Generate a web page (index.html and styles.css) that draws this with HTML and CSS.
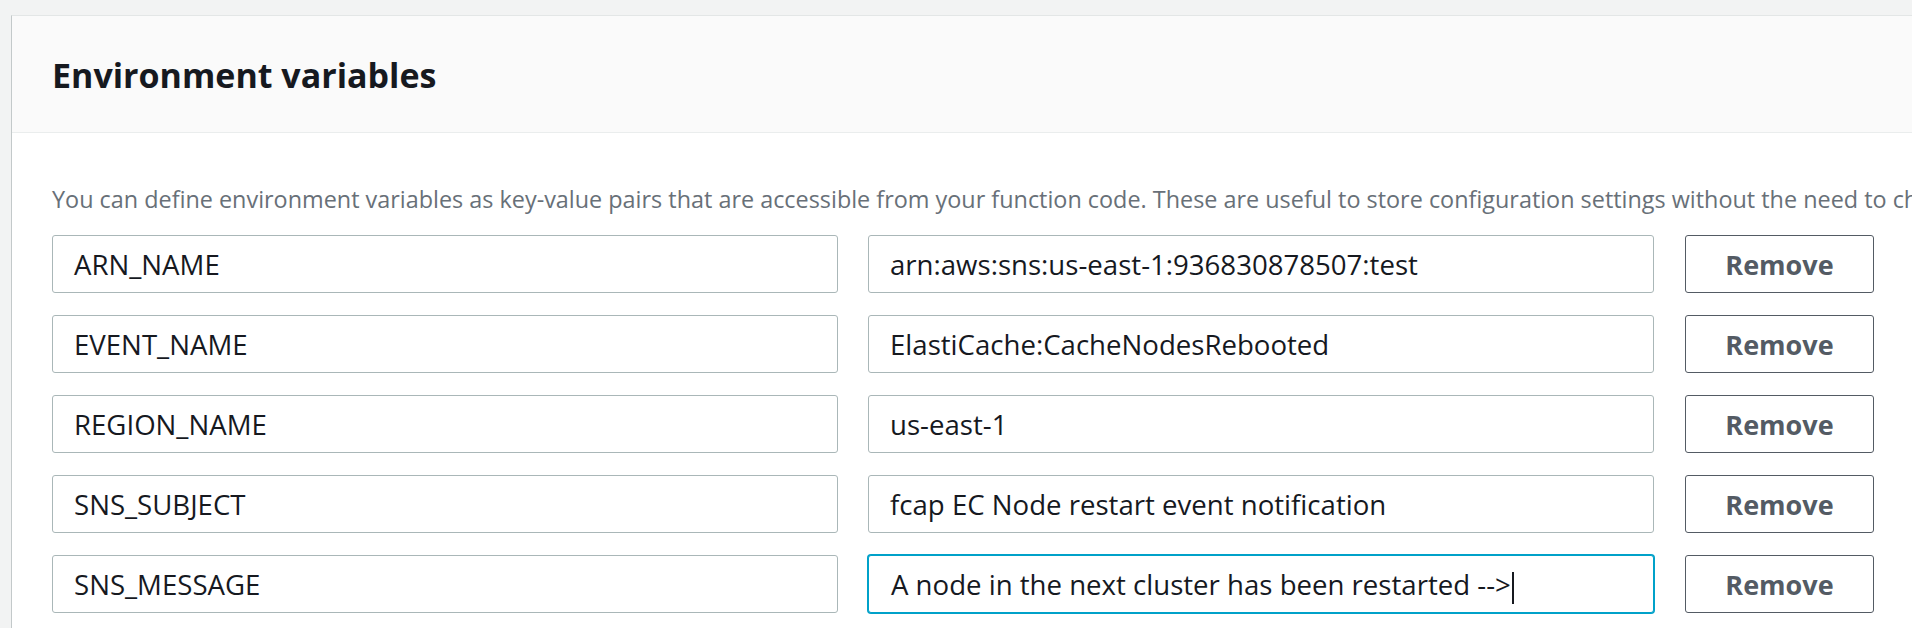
FILE: index.html
```html
<!DOCTYPE html>
<html lang="en">
<head>
<meta charset="utf-8">
<title>Environment variables</title>
<link rel="stylesheet" href="styles.css">
</head>
<body>
<section class="panel">
  <header class="panel-header">
    <h2 class="panel-title">Environment variables</h2>
  </header>
  <div class="panel-body">
    <p class="description">You can define environment variables as key-value pairs that are accessible from your function code. These are useful to store configuration settings without the need to change function code. Learn more</p>
    <div class="env-grid">
      <div class="field">ARN_NAME</div>
      <div class="field">arn:aws:sns:us-east-1:936830878507:test</div>
      <button class="remove-btn" type="button">Remove</button>

      <div class="field">EVENT_NAME</div>
      <div class="field">ElastiCache:CacheNodesRebooted</div>
      <button class="remove-btn" type="button">Remove</button>

      <div class="field">REGION_NAME</div>
      <div class="field">us-east-1</div>
      <button class="remove-btn" type="button">Remove</button>

      <div class="field">SNS_SUBJECT</div>
      <div class="field">fcap EC Node restart event notification</div>
      <button class="remove-btn" type="button">Remove</button>

      <div class="field">SNS_MESSAGE</div>
      <div class="field field-focused">A node in the next cluster has been restarted --&gt;<span class="caret"></span></div>
      <button class="remove-btn" type="button">Remove</button>
    </div>
  </div>
</section>
</body>
</html>
```
FILE: styles.css
```css
html, body {
  margin: 0;
  padding: 0;
}
body {
  background: #f2f3f3;
  padding: 15px 0 0 11px;
  overflow: hidden;
  font-family: "Open Sans", "Noto Sans", sans-serif;
  color: #16191f;
}
.panel {
  width: 2100px;
  background: #ffffff;
  border-top: 1px solid #e3e6e6;
  border-left: 1px solid #c3c9ca;
  min-height: 640px;
}
.panel-header {
  background: #fafafa;
  border-bottom: 1px solid #eaeded;
  padding: 39px 40px 37px;
}
.panel-title {
  margin: 0;
  font-size: 34px;
  line-height: 40px;
  font-weight: 700;
  color: #16191f;
}
.panel-body {
  padding: 50px 40px 0;
}
.description {
  margin: 0 0 20px;
  font-size: 23.4px;
  line-height: 32px;
  color: #687078;
  white-space: nowrap;
}
.env-grid {
  display: grid;
  grid-template-columns: 786px 786px 190px;
  column-gap: 30px;
  row-gap: 22px;
}
.field {
  box-sizing: border-box;
  height: 58px;
  border: 1px solid #aab7b8;
  border-radius: 3px;
  background: #ffffff;
  padding: 0 21px;
  font-size: 27.6px;
  line-height: 56px;
  color: #16191f;
  white-space: nowrap;
  overflow: hidden;
}
.field-focused {
  border-color: #00a1c9;
  box-shadow: 0 0 0 1px #00a1c9;
  padding-left: 22px;
}
.caret {
  display: inline-block;
  width: 2px;
  height: 32px;
  margin-left: 1px;
  background: #16191f;
  vertical-align: middle;
}
.remove-btn {
  box-sizing: border-box;
  height: 58px;
  margin: 0 0 0 1px;
  border: 1px solid #545b64;
  border-radius: 3px;
  background: #ffffff;
  color: #545b64;
  font-family: "Open Sans", "Noto Sans", sans-serif;
  font-size: 27px;
  font-weight: 700;
  padding: 0;
  cursor: pointer;
}
```
